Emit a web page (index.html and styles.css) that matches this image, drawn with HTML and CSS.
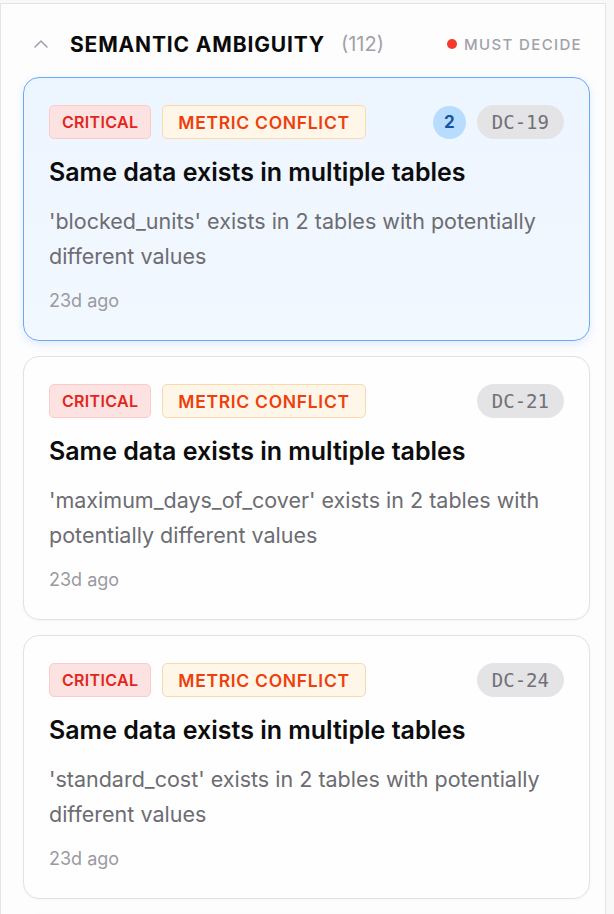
FILE: index.html
```html
<!DOCTYPE html>
<html lang="en">

<head>
     <meta charset="UTF-8">
     <title>Semantic Ambiguity</title>
     <link rel="stylesheet" href="styles.css">
</head>

<body>
     <div class="panel">
          <div class="group-head">
               <svg class="chevron" width="16" height="16" viewBox="0 0 16 16">
                    <polyline points="2,11 8,5 14,11" fill="none" stroke="#a1a1aa" stroke-width="1.6" stroke-linecap="round" stroke-linejoin="round" />
               </svg>
               <span class="group-title">SEMANTIC AMBIGUITY</span>
               <span class="group-count">(112)</span>
               <span class="must-decide"><i class="dot"></i>MUST DECIDE</span>
          </div>

          <div class="list">
               <div class="card selected">
                    <div class="card-top">
                         <span class="tag tag-critical">CRITICAL</span>
                         <span class="tag tag-conflict">METRIC CONFLICT</span>
                         <span class="spacer"></span>
                         <span class="count-bubble">2</span>
                         <span class="code">DC-19</span>
                    </div>
                    <div class="card-title">Same data exists in multiple tables</div>
                    <div class="card-desc">'blocked_units' exists in 2 tables with potentially different values</div>
                    <div class="card-time">23d ago</div>
               </div>

               <div class="card">
                    <div class="card-top">
                         <span class="tag tag-critical">CRITICAL</span>
                         <span class="tag tag-conflict">METRIC CONFLICT</span>
                         <span class="spacer"></span>
                         <span class="code">DC-21</span>
                    </div>
                    <div class="card-title">Same data exists in multiple tables</div>
                    <div class="card-desc">'maximum_days_of_cover' exists in 2 tables with potentially different values</div>
                    <div class="card-time">23d ago</div>
               </div>

               <div class="card">
                    <div class="card-top">
                         <span class="tag tag-critical">CRITICAL</span>
                         <span class="tag tag-conflict">METRIC CONFLICT</span>
                         <span class="spacer"></span>
                         <span class="code">DC-24</span>
                    </div>
                    <div class="card-title">Same data exists in multiple tables</div>
                    <div class="card-desc">'standard_cost' exists in 2 tables with potentially different values</div>
                    <div class="card-time">23d ago</div>
               </div>

               <!-- next card, only its top edge is in view -->
               <div class="card card-next"></div>
          </div>
     </div>
</body>

</html>
```

FILE: styles.css
```css
* {
     margin: 0;
     padding: 0;
     box-sizing: border-box;
}

body {
     background: #f8f8f9;
     font-family: Inter, "Noto Sans", sans-serif;
     color: #111;
     overflow: hidden;
}

.panel {
     width: 606px;
     margin-top: 3px;
     background: #fdfdfe;
     border: 1px solid #e4e4e7;
     border-bottom: none;
     padding: 0 15px 0 22px;
}

.group-head {
     display: flex;
     align-items: center;
     height: 26px;
     margin: 27px 8px 20px 10px;
}

.chevron {
     margin-right: 21px;
}

.group-title {
     font-size: 21px;
     font-weight: 700;
     letter-spacing: 0.04em;
     color: #0a0a0a;
}

.group-count {
     margin-left: 16px;
     font-size: 20px;
     color: #a1a1aa;
}

.must-decide {
     margin-left: auto;
     display: flex;
     align-items: center;
     font-size: 15px;
     font-weight: 500;
     letter-spacing: 0.09em;
     color: #a1a1aa;
}

.dot {
     width: 10px;
     height: 10px;
     border-radius: 50%;
     background: #f5392c;
     margin-right: 7px;
}

.list {
     display: flex;
     flex-direction: column;
     gap: 15px;
}

.card {
     background: #fefefe;
     border: 1px solid #e2e2e5;
     border-radius: 16px;
     padding: 27px 25px 27px 25px;
     box-shadow: 0 1px 3px rgba(0, 0, 0, 0.03);
}

.card.selected {
     background: linear-gradient(180deg, #edf5ff 0%, #f2f8ff 100%);
     border-color: #6aa9f5;
     box-shadow: 0 3px 8px rgba(59, 130, 246, 0.15);
}

.card-next {
     height: 264px;
}

.card-top {
     display: flex;
     align-items: center;
     gap: 11px;
     height: 34px;
}

.spacer {
     flex: 1;
}

.tag {
     height: 34px;
     display: flex;
     align-items: center;
     border-radius: 5px;
     font-weight: 600;
}

.tag-critical {
     padding: 0 12px;
     font-size: 16px;
     letter-spacing: 0.02em;
     background: #fde2e2;
     border: 1px solid #fbcaca;
     color: #e1261c;
}

.tag-conflict {
     padding: 0 15px;
     font-size: 17.5px;
     letter-spacing: 0.04em;
     background: #fff6ea;
     border: 1px solid #fbd9a8;
     color: #ee3f0c;
}

.count-bubble {
     width: 33px;
     height: 33px;
     border-radius: 50%;
     background: #b8dcfd;
     color: #15529f;
     font-size: 17px;
     font-weight: 700;
     display: flex;
     align-items: center;
     justify-content: center;
}

.code {
     height: 34px;
     display: flex;
     align-items: center;
     padding: 0 15px;
     border-radius: 17px;
     background: #e4e3e6;
     color: #717176;
     font-family: "DejaVu Sans Mono", monospace;
     font-size: 19px;
}

.card-title {
     margin-top: 18px;
     font-size: 25px;
     line-height: 30px;
     font-weight: 600;
     color: #0c0c0c;
}

.card-desc {
     margin-top: 17px;
     font-size: 21.5px;
     line-height: 35px;
     color: #6c6c72;
}

.card-time {
     margin-top: 15px;
     font-size: 18px;
     line-height: 24px;
     color: #9a9aa2;
}
```
